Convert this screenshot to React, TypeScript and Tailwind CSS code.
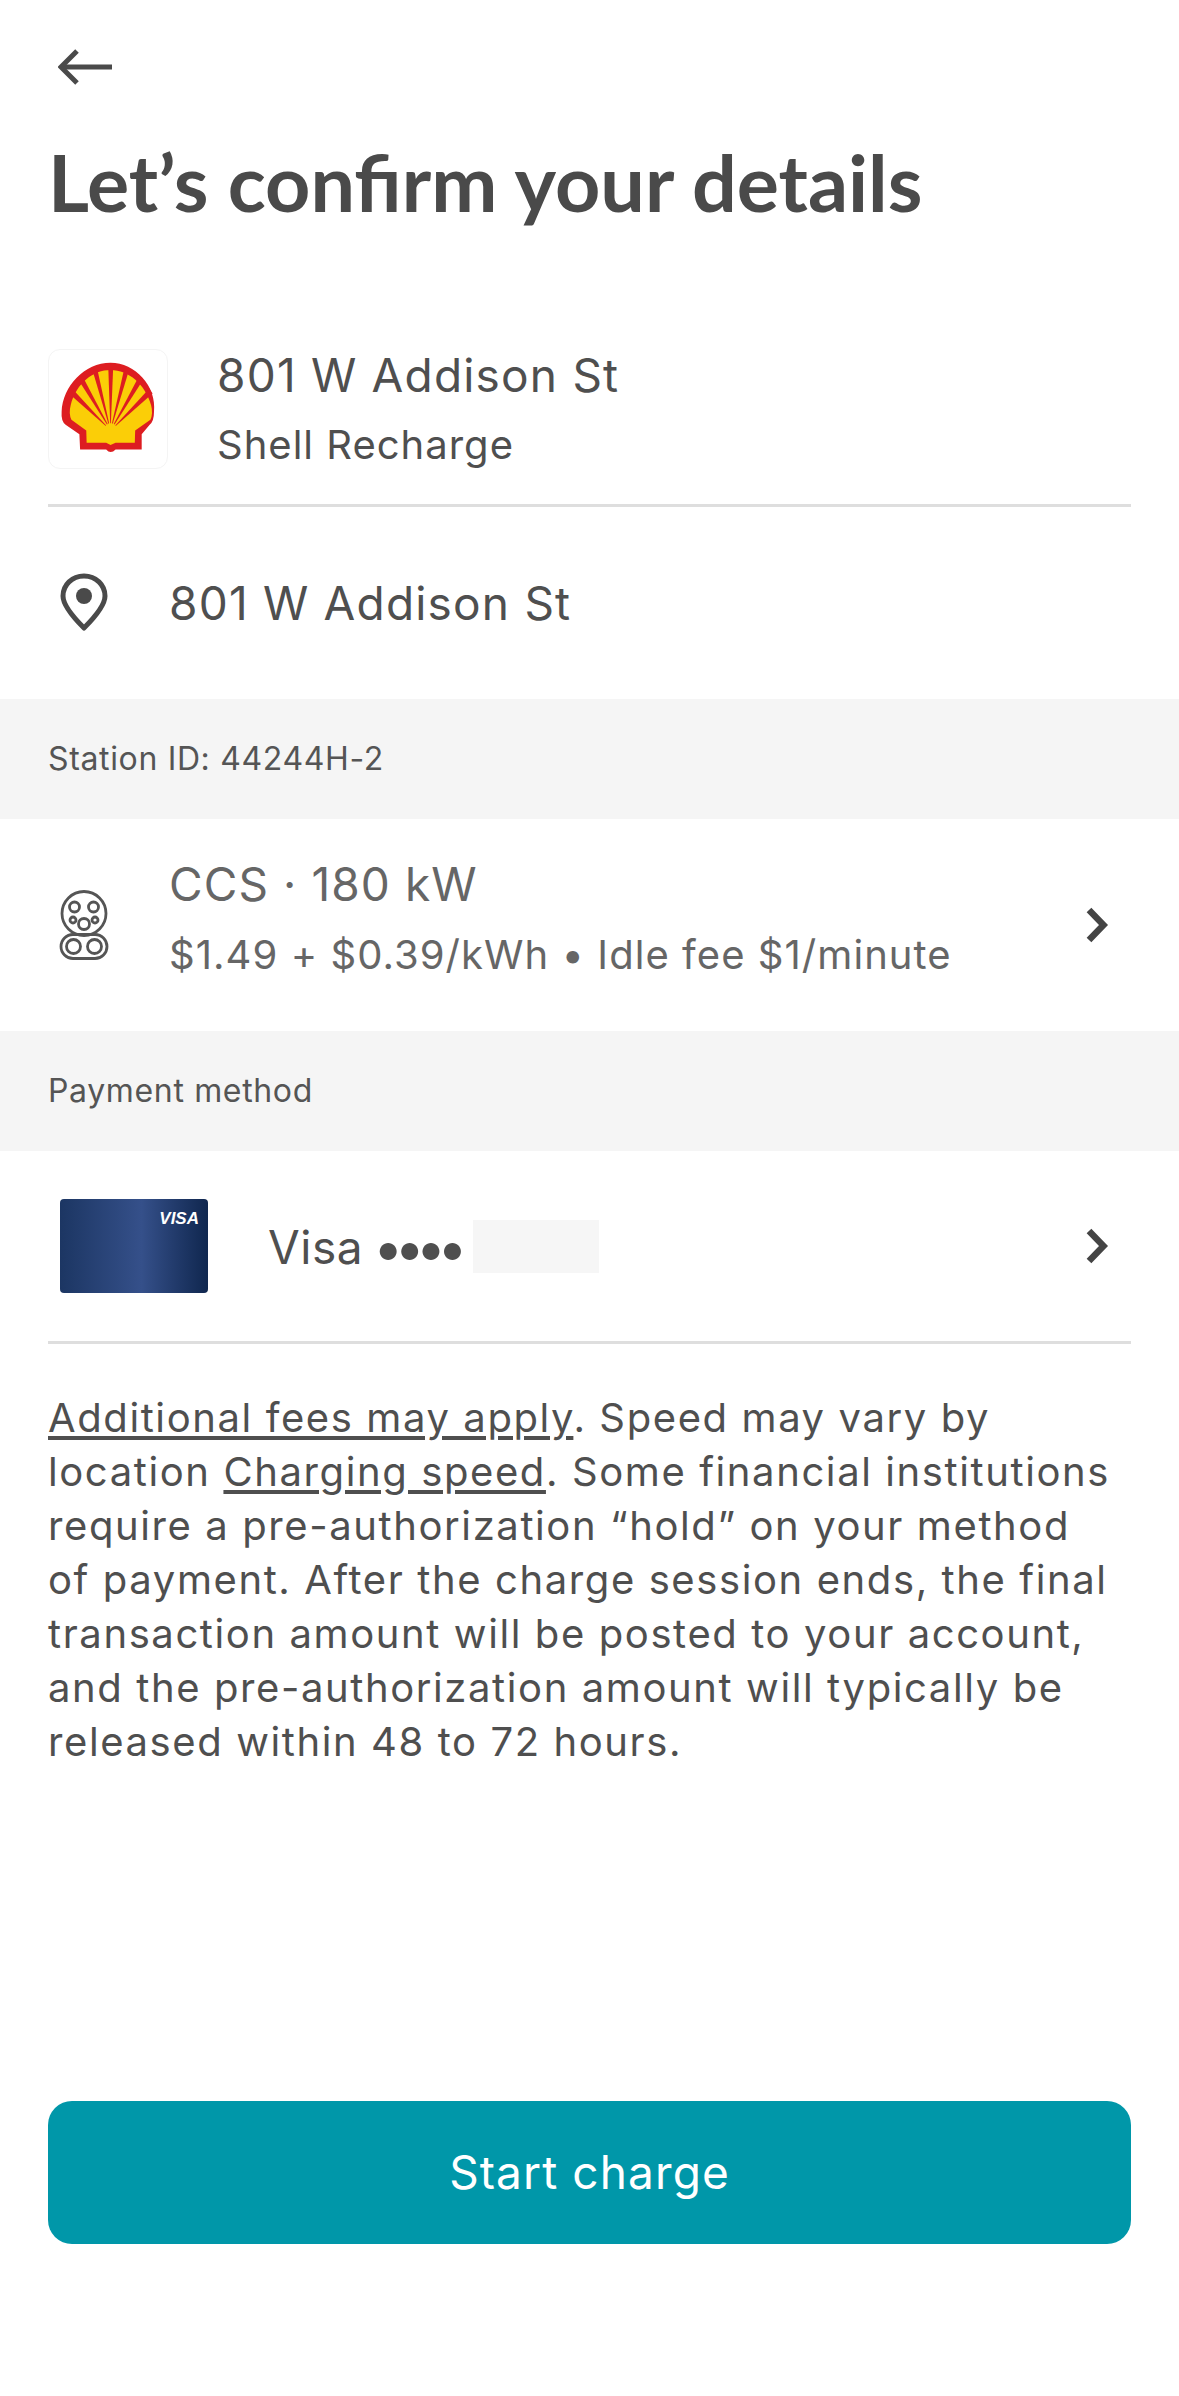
import React from "react";

const inter = "font-['Inter','Noto_Sans',sans-serif]";

const ShellLogo = () => (
  <svg viewBox="90 100 270 265" className="h-[96px] w-[98px]">
    <path
      d="M148 344 L146 302 L108 276 Q95 266 97 240 C100 170 160 105 232 105 C300 105 360 170 352 240 Q352 266 340 276 L318 302 L318 344 L246 344 Q232 358 220 344 Z"
      fill="#dd1d21"
    />
    <path
      d="M166 326 L165 292 L124 262 Q116 245 122 222 C138 160 185 125 232 125 C282 125 328 165 344 222 Q350 245 342 262 L300 292 L299 326 L246 326 L232 332 L220 326 Z"
      fill="#fbce07"
    />
    <g fill="#dd1d21">
      <polygon points="226,124 239,124 233,272 231,272" />
      <polygon points="183,128 196,125 228,272 226,273" />
      <polygon points="143,152 155,143 224,274 222,275" />
      <polygon points="117,190 126,176 220,278 218,279" />
      <polygon points="269,125 282,128 238,273 236,272" />
      <polygon points="310,143 322,152 243,275 241,274" />
      <polygon points="339,176 348,190 247,279 245,278" />
    </g>
  </svg>
);

const PinIcon = () => (
  <svg viewBox="0 0 48 60" className="h-[60px] w-[48px]">
    <path
      d="M24 3 C12 3 3 12 3 23 C3 33 15 46 24 55 C33 46 45 33 45 23 C45 12 36 3 24 3 Z"
      fill="none"
      stroke="#4a4a4a"
      strokeWidth="5"
      strokeLinejoin="round"
    />
    <circle cx="24" cy="23" r="8" fill="#4a4a4a" />
  </svg>
);

const PlugIcon = () => (
  <svg viewBox="0 0 50 70" className="h-[70px] w-[50px]" fill="none" stroke="#555" strokeWidth="2.8">
    <circle cx="25" cy="23.5" r="22" />
    <circle cx="15.5" cy="17" r="5" />
    <circle cx="34.5" cy="17" r="5" />
    <circle cx="14" cy="30" r="3" />
    <circle cx="36" cy="30" r="3" />
    <circle cx="25" cy="34" r="5.5" />
    <rect x="2" y="44.5" width="46" height="24" rx="12" />
    <circle cx="14.5" cy="56.5" r="7" />
    <circle cx="35.5" cy="56.5" r="7" />
  </svg>
);

const BackArrow = () => (
  <svg viewBox="0 0 54 36" className="h-[36px] w-[54px]" fill="none" stroke="#4a4a4a" strokeWidth="5">
    <path d="M54 18 H4" />
    <path d="M19 2 L3 18 L19 34" />
  </svg>
);

const Band = ({ children }: { children: React.ReactNode }) => (
  <div className="flex h-[120px] items-center bg-[#f5f5f5] px-12 text-[32px] tracking-[0.65px] text-[#555]">
    {children}
  </div>
);

const Chevron = () => (
  <svg viewBox="0 0 24 36" className="h-[36px] w-[24px]" fill="none" stroke="#444" strokeWidth="6.5">
    <path d="M4 3 L18.5 18 L4 33" />
  </svg>
);

export default function App() {
  return (
    <div className={`flex h-[2396px] w-[1179px] flex-col bg-white ${inter} text-[#4f4f4f]`}>
      <div className="pt-[49px] pl-[58px]">
        <BackArrow />
      </div>
      <h1 className="mt-[52px] px-12 font-['Lato',sans-serif] text-[79px] leading-[90px] font-bold text-[#4a4a4a]">
        Let’s confirm your details
      </h1>

      <div className="mt-[120px] flex items-center px-12">
        <div className="flex h-[120px] w-[120px] shrink-0 items-center justify-center rounded-xl border border-[#f4f4f4]">
          <ShellLogo />
        </div>
        <div className="ml-[49px]">
          <div className="text-[46px] leading-[56px] tracking-[1.2px]">801 W Addison St</div>
          <div className="mt-[17px] text-[40px] leading-[50px] tracking-[1px]">Shell Recharge</div>
        </div>
      </div>
      <div className="mx-12 mt-[34px] h-[3px] bg-[#dedede]" />

      <div className="flex h-[192px] items-center px-[60px]">
        <PinIcon />
        <span className="ml-[61px] text-[46px] tracking-[1.2px]">801 W Addison St</span>
      </div>

      <Band>Station ID: 44244H-2</Band>

      <div className="flex h-[212px] items-center pr-[70px] pl-[59px]">
        <PlugIcon />
        <div className="ml-[60px] flex-1 pb-[14px]">
          <div className="text-[46px] leading-[56px] tracking-[1.1px] text-[#666]">CCS · 180 kW</div>
          <div className="mt-[18px] text-[40px] leading-[50px] tracking-[1.05px] text-[#666]">
            $1.49 + $0.39/kWh • Idle fee $1/minute
          </div>
        </div>
        <Chevron />
      </div>

      <Band>Payment method</Band>

      <div className="flex h-[190px] items-center pr-[70px] pl-[60px]">
        <div className="flex h-[94px] w-[148px] justify-end rounded-[4px] bg-gradient-to-r from-[#1c3663] via-[#35508a] via-55% to-[#10274f] pt-[10px] pr-[9px]">
          <span className="font-['Liberation_Sans',sans-serif] text-[17px] leading-[20px] font-bold text-white italic">
            VISA
          </span>
        </div>
        <span className="ml-[60px] flex items-center pt-[3px] text-[46px] tracking-[0.5px]">
          Visa
          <span className="ml-[10px] text-[54px] leading-[56px] tracking-[-9px]">••••</span>
        </span>
        <div className="ml-[14px] h-[53px] w-[126px] bg-[#f6f6f6]" />
        <div className="flex-1" />
        <Chevron />
      </div>
      <div className="mx-12 h-[3px] bg-[#dedede]" />

      <p className="mt-[47px] pr-[60px] pl-12 text-[40px] leading-[54px] tracking-[1.6px]">
        <span className="underline underline-offset-4">Additional fees may apply</span>. Speed may vary by location{" "}
        <span className="underline underline-offset-4">Charging speed</span>. Some financial institutions require a
        pre-authorization “hold” on your method of payment. After the charge session ends, the final transaction
        amount will be posted to your account, and the pre-authorization amount will typically be released within 48
        to 72 hours.
      </p>

      <div className="mt-auto mb-[152px] px-12">
        <button className="flex h-[143px] w-full items-center justify-center rounded-3xl bg-[#0097a9] text-[46px] tracking-[1.1px] text-white">
          Start charge
        </button>
      </div>
    </div>
  );
}
